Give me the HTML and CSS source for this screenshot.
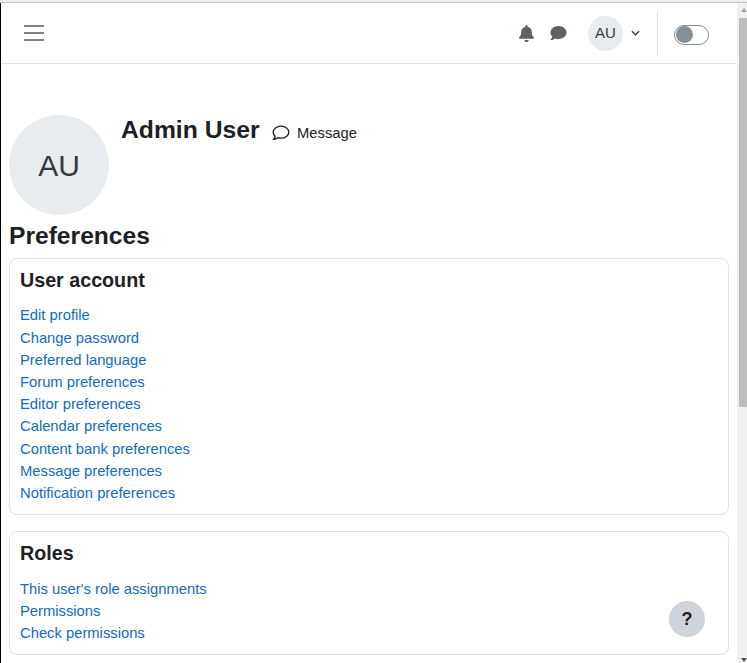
FILE: index.html
```html
<!DOCTYPE html>
<html lang="en">
<head>
<meta charset="utf-8">
<title>Admin User: Preferences</title>
<link rel="stylesheet" href="styles.css">
</head>
<body>
<div class="topstrip"></div>
<div class="window">
  <div class="viewport">
    <header class="navbar">
      <button class="hamburger" aria-label="Menu"><span></span><span></span><span></span></button>
      <div class="nav-right">
        <svg class="nav-icon bell" viewBox="0 0 448 512" aria-hidden="true"><path d="M224 512c35.300 0 64-28.700 64-64H160c0 35.300 28.700 64 64 64zm215.400-149.700c-19.300-20.800-55.500-52-55.500-154.300 0-77.700-54.500-139.900-127.900-155.200V32c0-17.700-14.300-32-32-32s-32 14.300-32 32v20.800C118.600 68.100 64.100 130.300 64.100 208c0 102.300-36.200 133.500-55.500 154.300-6 6.400-8.700 14.100-8.600 21.700.1 16.400 13 32 32.100 32h383.800c19.100 0 32-15.600 32.100-32 .1-7.600-2.600-15.300-8.600-21.700z"/></svg>
        <svg class="nav-icon chat" viewBox="0 0 512 512" aria-hidden="true"><path d="M256 32C114.600 32 0 125.100 0 240c0 49.600 21.400 95 57 130.700C44.500 421.100 2.700 466 2.200 466.500c-2.200 2.300-2.800 5.700-1.500 8.700S4.800 480 8 480c66.300 0 116-31.800 140.600-51.400 32.700 12.300 69 19.400 107.400 19.400 141.400 0 256-93.100 256-208S397.400 32 256 32z"/></svg>
        <div class="user-menu">
          <span class="avatar-sm">AU</span>
          <svg class="caret" viewBox="0 0 10 6" aria-hidden="true"><path d="M1 1l4 4 4-4"/></svg>
        </div>
        <div class="divider"></div>
        <div class="toggle"><span class="knob"></span></div>
      </div>
    </header>
    <main class="content">
      <div class="profile-head">
        <div class="avatar-lg">AU</div>
        <div class="profile-title">
          <h1 class="name">Admin User</h1>
          <a class="message-link">
            <svg class="msg-icon" viewBox="0 0 18 16" aria-hidden="true"><path d="M9 1.200c4.300 0 7.800 2.700 7.800 6s-3.500 6-7.800 6c-1.100 0-2.100-.2-3.100-.5-1 .8-2.400 1.500-4.200 1.600.7-.8 1.300-1.800 1.500-2.900C1.900 10.300 1.200 8.800 1.200 7.200c0-3.300 3.500-6 7.800-6z"/></svg>
            <span>Message</span>
          </a>
        </div>
      </div>
      <h2 class="page-title">Preferences</h2>
      <section class="card">
        <h3 class="card-title">User account</h3>
        <ul class="links">
          <li><a>Edit profile</a></li>
          <li><a>Change password</a></li>
          <li><a>Preferred language</a></li>
          <li><a>Forum preferences</a></li>
          <li><a>Editor preferences</a></li>
          <li><a>Calendar preferences</a></li>
          <li><a>Content bank preferences</a></li>
          <li><a>Message preferences</a></li>
          <li><a>Notification preferences</a></li>
        </ul>
      </section>
      <section class="card">
        <h3 class="card-title">Roles</h3>
        <ul class="links">
          <li><a>This user's role assignments</a></li>
          <li><a>Permissions</a></li>
          <li><a>Check permissions</a></li>
        </ul>
      </section>
    </main>
    <button class="help">?</button>
  </div>
  <div class="scrollbar">
    <div class="arrow up"></div>
    <div class="track"><div class="thumb"></div></div>
    <div class="arrow down"></div>
  </div>
</div>
</body>
</html>
```

FILE: styles.css
```css
* { box-sizing: border-box; }
html, body { margin: 0; height: 100%; overflow: hidden; }
body {
  display: flex;
  flex-direction: column;
  background: #fff;
  color: #1d2125;
  font-family: "Liberation Sans", Arial, sans-serif;
  font-size: 14.770px;
}
.topstrip { height: 3px; background: #f1efec; border-bottom: 1px solid #c9c1b6; }
.window { flex: 1; min-height: 0; display: flex; border-left: 1px solid #000; }
.viewport { position: relative; flex: 1; min-width: 0; overflow: hidden; }
.navbar {
  height: 61px;
  display: flex;
  align-items: center;
  justify-content: space-between;
  border-bottom: 1px solid #dee2e6;
  padding: 0 28px 0 23px;
}
.hamburger {
  display: flex;
  flex-direction: column;
  gap: 5px;
  width: 20px;
  padding: 0;
  border: 0;
  background: none;
}
.hamburger span { height: 2px; background: #808080; }
.nav-right { display: flex; align-items: center; height: 100%; }
.nav-icon { fill: #5c6166; display: block; }
.bell { width: 15px; height: 17px; margin-right: 16px; }
.chat { width: 17px; height: 16px; margin-right: 21px; }
.user-menu { display: flex; align-items: center; gap: 8px; margin-right: 17px; }
.avatar-sm {
  width: 35px;
  height: 35px;
  border-radius: 50%;
  background: #e9ecef;
  display: flex;
  align-items: center;
  justify-content: center;
  padding-bottom: 2px;
  font-size: 15px;
  color: #343a40;
}
.caret { width: 9px; height: 6px; fill: none; stroke: #343a40; stroke-width: 1.400; }
.divider { width: 1px; height: 45px; background: #dee2e6; margin-right: 16px; }
.toggle {
  width: 35px;
  height: 20px;
  border: 1px solid #868e96;
  border-radius: 10px;
  padding: 0.500px;
  margin-top: 3px;
}
.knob { display: block; width: 17px; height: 17px; border-radius: 50%; background: #868e96; }
.content { padding: 0 8px; }
.profile-head { display: flex; padding-top: 51px; }
.avatar-lg {
  width: 100px;
  height: 100px;
  border-radius: 50%;
  background: #e9ecef;
  display: flex;
  align-items: center;
  justify-content: center;
  padding-top: 2px;
  font-size: 30px;
  color: #343a40;
  flex: none;
}
.profile-title { display: flex; align-items: flex-start; margin-left: 12px; }
.name { margin: 0; font-size: 24.700px; line-height: 30px; font-weight: 700; }
.message-link { display: flex; align-items: center; margin: 3px 0 0 12.500px; height: 30px; font-size: 14.770px; }
.msg-icon { width: 18px; height: 16px; fill: none; stroke: #1d2125; stroke-width: 1.300; margin-right: 7px; }
.page-title { margin: 5px 0 7px; font-size: 24.620px; line-height: 31px; font-weight: 700; }
.card {
  width: 720px;
  border: 1px solid #dee2e6;
  border-radius: 8px;
  padding: 10px;
  margin-bottom: 16px;
}
.card-title { margin: 0 0 12.400px; font-size: 19.690px; line-height: 23px; font-weight: 700; }
.links { margin: 0; padding: 0; list-style: none; }
.links li { line-height: 22.200px; }
.links a { color: #0f6cbf; }
.help {
  position: absolute;
  left: 668px;
  top: 598px;
  width: 36px;
  height: 36px;
  border: 0;
  border-radius: 50%;
  background: #ced4da;
  color: #1d2125;
  font: 700 18px "Liberation Sans", Arial, sans-serif;
  padding: 0;
}
.scrollbar { width: 10px; background: #f0f0f0; display: flex; flex-direction: column; flex: none; overflow: hidden; }
.arrow { height: 15px; flex: none; position: relative; }
.arrow::after {
  content: "";
  position: absolute;
  left: 3.500px;
  border-left: 3.500px solid transparent;
  border-right: 3.500px solid transparent;
}
.arrow.up::after { top: 5px; border-bottom: 4px solid #a3a3a3; }
.arrow.down::after { bottom: 1px; border-top: 4px solid #505050; }
.track { flex: 1; }
.thumb { height: 389px; margin-left: 2px; background: #bdbdbd; }
```
